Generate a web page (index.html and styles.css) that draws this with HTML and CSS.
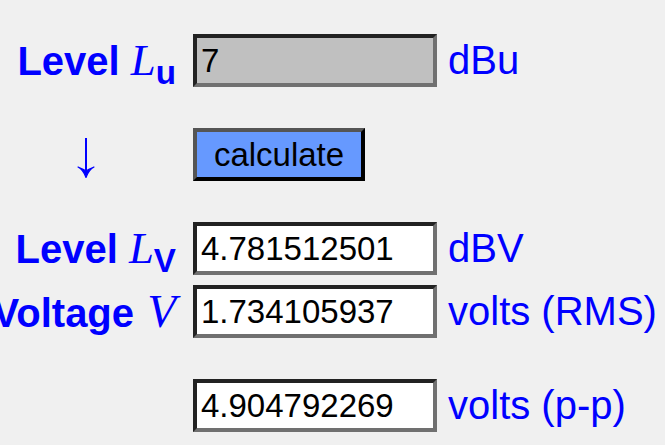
FILE: index.html
```html
<!DOCTYPE html>
<html lang="en">
<head>
    <meta charset="UTF-8">
    <meta name="viewport" content="width=device-width, initial-scale=1.0">
    <title>dBu to dBV and volts</title>
    <link rel="stylesheet" href="styles.css">
</head>
<body>
    <!-- Converter -->
    <form class="converter" id="converter">
        <!-- Input level -->
        <div class="row">
            <label class="label" for="lu">Level <i class="var">L</i><sub>u</sub></label>
            <input type="text" class="field field-in" id="lu" value="7">
            <span class="unit">dBu</span>
        </div>

        <div class="row spaced">
            <svg class="arrow" width="18" height="40" viewBox="0 0 18 40">
                <line x1="9" y1="0" x2="9" y2="37" stroke="#0000ff" stroke-width="2"/>
                <path d="M1 29 Q6 31.5 9 39.5 Q12 31.5 17 29 Q12 31 9 33 Q6 31 1 29 Z" fill="#0000ff" stroke="#0000ff" stroke-width="1.2" stroke-linejoin="round"/>
            </svg>
            <button type="button" class="calc">calculate</button>
        </div>

        <!-- Results -->
        <div class="row spaced">
            <label class="label" for="lv">Level <i class="var">L</i><sub>V</sub></label>
            <input type="text" class="field" id="lv" value="4.781512501">
            <span class="unit">dBV</span>
        </div>

        <div class="row">
            <label class="label" for="vrms">Voltage <i class="var var-v">V</i></label>
            <input type="text" class="field" id="vrms" value="1.734105937">
            <span class="unit">volts (RMS)</span>
        </div>

        <div class="row spaced">
            <span class="label"></span>
            <input type="text" class="field" id="vpp" value="4.904792269">
            <span class="unit">volts (p-p)</span>
        </div>
    </form>
</body>
</html>
```

FILE: styles.css
```css
body {
    margin: 0;
    background-color: #f0f0f0;
    font-family: "Liberation Sans", Arial, sans-serif;
    color: #0000ff;
    overflow: hidden;
}
.converter {
    display: flex;
    flex-direction: column;
    gap: 10px;
    padding-top: 34px;
}
.row {
    display: grid;
    grid-template-columns: 176px 261px auto;
    align-items: center;
    height: 53px;
}
.spaced {
    margin-top: 31px;
}
.row > input,
.row > button {
    margin-left: 17px;
}
.label {
    justify-self: end;
    white-space: nowrap;
    font-size: 40px;
    font-weight: bold;
    line-height: 46px;
}
.var {
    font-family: "Liberation Serif", "Times New Roman", serif;
    font-weight: normal;
    font-size: 1.12em;
}
.var-v {
    margin-left: 2px;
    font-size: 1.18em;
}
sub {
    font-size: 0.83em;
    line-height: 0;
}
.arrow {
    justify-self: center;
    margin: 7px 5px 0 0;
}
.field {
    box-sizing: border-box;
    width: 244px;
    height: 53px;
    padding: 0 4px;
    border: 4px solid;
    border-color: #222 #707070 #707070 #222;
    background: white;
    font-family: "Liberation Sans", Arial, sans-serif;
    font-size: 33px;
    color: black;
    outline: none;
}
.field-in {
    background: #c0c0c0;
}
.calc {
    box-sizing: border-box;
    justify-self: start;
    width: 172px;
    height: 53px;
    padding: 0;
    border: 4px solid;
    border-color: #555 #000 #000 #555;
    background-color: #6699ff;
    font-family: "Liberation Sans", Arial, sans-serif;
    font-size: 33px;
    color: black;
}
.unit {
    margin-left: 11px;
    font-size: 40px;
    white-space: nowrap;
}
```
